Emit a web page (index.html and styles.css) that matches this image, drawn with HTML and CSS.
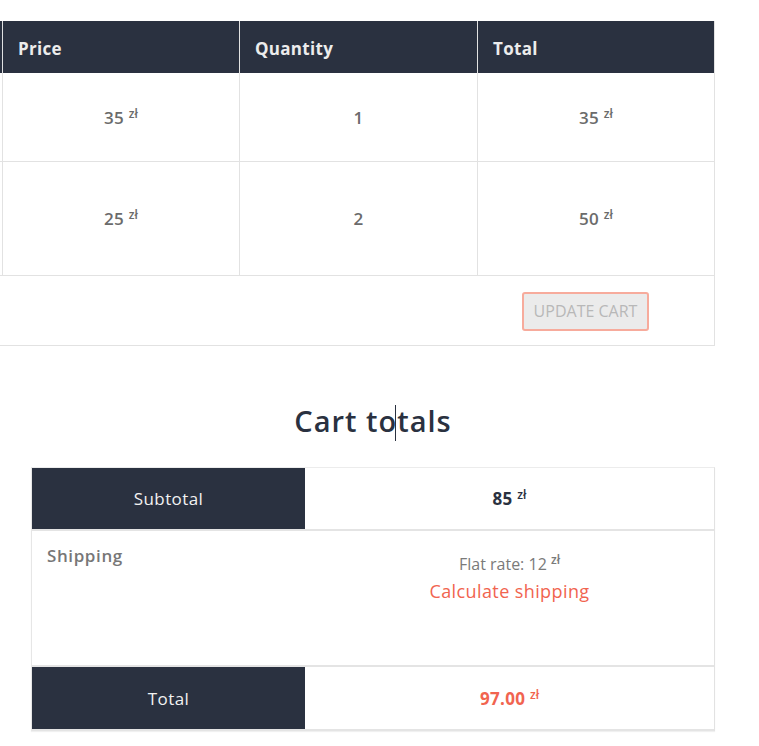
FILE: index.html
```html
<!DOCTYPE html>
<html lang="pl">
<head>
<meta charset="utf-8">
<title>Cart</title>
<link rel="stylesheet" href="styles.css">
</head>
<body>
<main class="page">
  <table class="cart">
    <colgroup>
      <col class="c-stub"><col class="c-price"><col class="c-qty"><col class="c-total">
    </colgroup>
    <thead>
      <tr>
        <th class="stub"></th>
        <th>Price</th>
        <th>Quantity</th>
        <th>Total</th>
      </tr>
    </thead>
    <tbody>
      <tr class="row-a">
        <td class="stub"></td>
        <td>35 <sup class="cur">zł</sup></td>
        <td>1</td>
        <td>35 <sup class="cur">zł</sup></td>
      </tr>
      <tr class="row-b">
        <td class="stub"></td>
        <td>25 <sup class="cur">zł</sup></td>
        <td>2</td>
        <td>50 <sup class="cur">zł</sup></td>
      </tr>
      <tr class="row-actions">
        <td colspan="4" class="actions"><button class="update" type="button">Update cart</button></td>
      </tr>
    </tbody>
  </table>

  <section class="totals">
    <h2 class="totals-title">Cart to<span class="caret"></span>tals</h2>
    <table class="totals-table">
      <colgroup><col class="t-label"><col class="t-value"></colgroup>
      <tr class="t-sub">
        <th class="dark">Subtotal</th>
        <td class="amount">85 <sup class="cur">zł</sup></td>
      </tr>
      <tr class="t-ship">
        <th class="light">Shipping</th>
        <td class="ship">
          <div class="flat">Flat rate: 12 <sup class="cur">zł</sup></div>
          <a class="calc" href="#">Calculate shipping</a>
        </td>
      </tr>
      <tr class="t-total">
        <th class="dark">Total</th>
        <td class="amount grand">97.00 <sup class="cur">zł</sup></td>
      </tr>
    </table>
  </section>
</main>
</body>
</html>
```

FILE: styles.css
```css
* { box-sizing: border-box; }

html, body {
  margin: 0;
  padding: 0;
  background: #ffffff;
}

body {
  font-family: "Open Sans", "Liberation Sans", sans-serif;
  color: #2a3140;
  width: 759px;
  height: 746px;
  overflow: hidden;
}

.page {
  padding-top: 21px;
}

/* ---------- cart table ---------- */
.cart {
  width: 715px;
  table-layout: fixed;
  border-collapse: separate;
  border-spacing: 0;
}

.c-stub { width: 3px; }
.c-price { width: 237px; }
.c-qty { width: 238px; }
.c-total { width: 237px; }

.cart th,
.cart td {
  padding: 0;
  border-right: 1px solid #e2e2e2;
  border-bottom: 1px solid #e2e2e2;
}

.cart thead th {
  background: #2a3140;
  color: #ececec;
  font-size: 17px;
  font-weight: 700;
  letter-spacing: 0.3px;
  text-align: left;
  height: 52px;
  padding-left: 15px;
  padding-top: 2px;
  border-bottom: none;
}

.cart thead th.stub {
  padding: 0;
  border-right-color: #dfe0e2;
}

.cart tbody td {
  text-align: center;
  vertical-align: middle;
  color: #6b6b6b;
  font-size: 17px;
  font-weight: 600;
  letter-spacing: 0.3px;
}

.row-a td { height: 89px; }
.row-b td { height: 114px; }

.row-actions td { height: 70px; }

.actions {
  text-align: right !important;
  padding-right: 65px !important;
}

.update {
  font-family: "Open Sans", "Liberation Sans", sans-serif;
  font-size: 16px;
  font-weight: 400;
  text-transform: uppercase;
  color: #b8b8b8;
  background: #ebebeb;
  border: 2px solid #f7ab9c;
  border-radius: 3px;
  width: 127px;
  height: 39px;
  padding: 0;
  margin-top: 1px;
}

.cur {
  font-size: 12px;
  font-weight: 600;
  letter-spacing: 0;
  vertical-align: 6px;
  line-height: 0;
}

/* ---------- totals ---------- */
.totals {
  margin-left: 31px;
  width: 684px;
}

.totals-title {
  margin: 57px 0 26px;
  text-align: center;
  font-size: 29px;
  line-height: 36px;
  font-weight: 600;
  color: #2a3140;
  letter-spacing: 1px;
}

.caret {
  display: inline-block;
  width: 1px;
  height: 36px;
  background: #2a3140;
  vertical-align: -9px;
  margin-left: -2px;
  margin-right: 1px;
}

.totals-table {
  width: 684px;
  table-layout: fixed;
  border-collapse: separate;
  border-spacing: 0;
  border-top: 1px solid #ececec;
  border-right: 1px solid #e2e2e2;
  border-left: 1px solid #e6e6e6;
  box-shadow: 0 1px 1px rgba(0, 0, 0, 0.06);
}

.t-label { width: 273px; }
.t-value { width: 409px; }

.totals-table th,
.totals-table td {
  padding: 0;
  border-bottom: 2px solid #e4e4e4;
  font-size: 17px;
}

.totals-table th.dark {
  background: #2a3140;
  color: #f2f2f2;
  font-weight: 500;
  letter-spacing: 0.4px;
  text-align: center;
  vertical-align: middle;
}

.t-sub th, .t-sub td { height: 63px; }
.t-ship th, .t-ship td { height: 136px; }
.t-total th, .t-total td { height: 64px; }

.totals-table .amount {
  text-align: center;
  vertical-align: middle;
  font-weight: 700;
  letter-spacing: 0.3px;
  color: #2a3140;
}

.totals-table .amount.grand {
  color: #f1644f;
}

.totals-table th.light {
  background: #ffffff;
  color: #777777;
  font-weight: 600;
  letter-spacing: 0.6px;
  text-align: left;
  vertical-align: top;
  padding: 13px 15px 0;
}

.ship {
  text-align: center;
  vertical-align: top;
  padding-top: 21px !important;
}

.flat {
  color: #7a7a7a;
  font-size: 16px;
  line-height: 24px;
}

.calc {
  display: inline-block;
  margin-top: 3px;
  color: #f1644f;
  font-size: 18px;
  letter-spacing: 0.4px;
  line-height: 24px;
  text-decoration: none;
}
```
